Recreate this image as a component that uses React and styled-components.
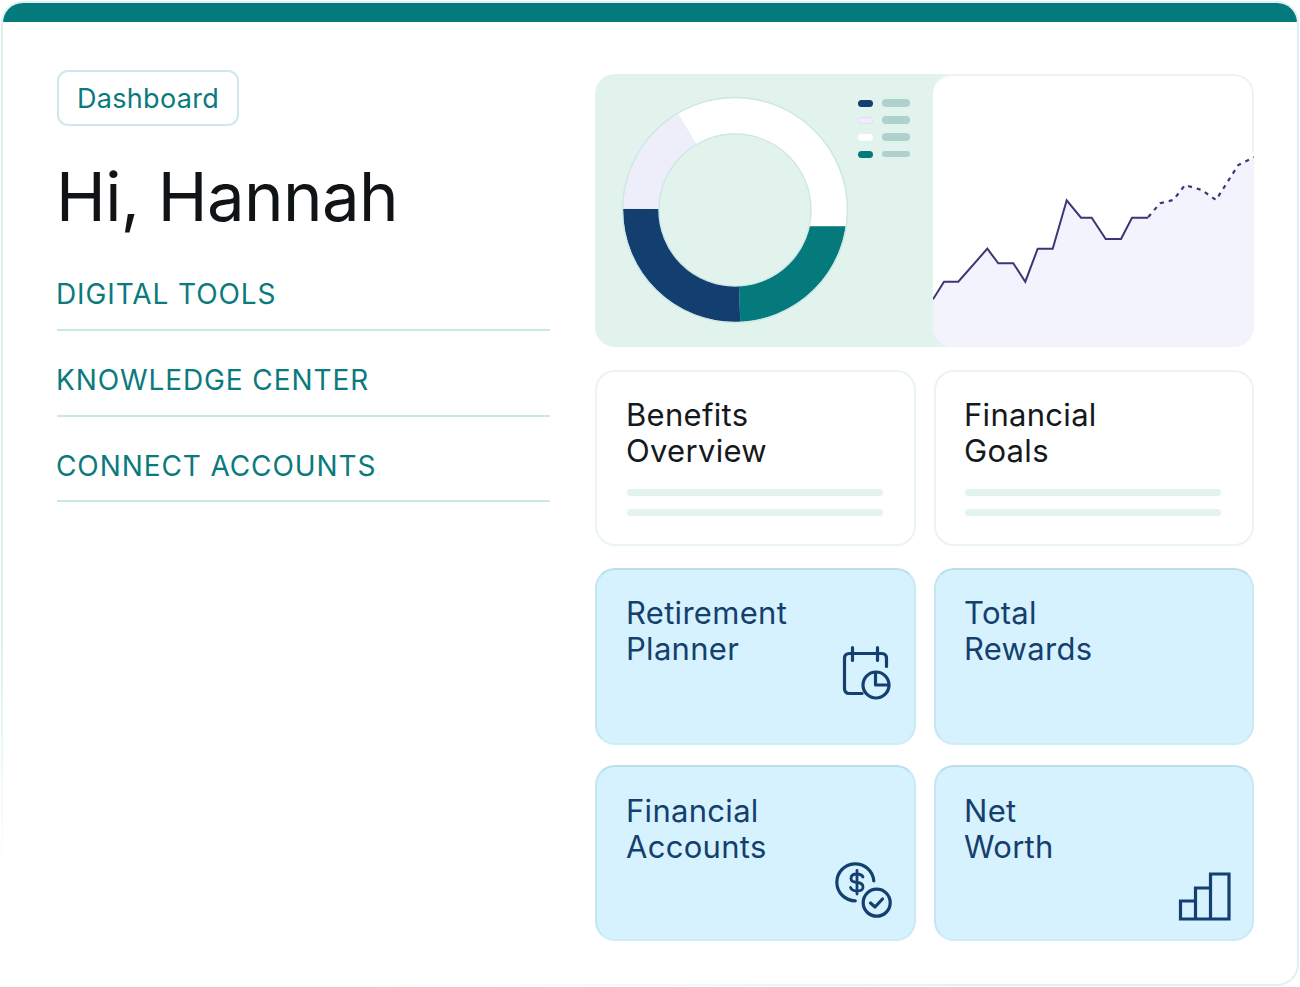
import React from "react";
import styled, { createGlobalStyle } from "styled-components";

const Global = createGlobalStyle`
  html, body { margin: 0; padding: 0; background: #fff; }
  body { font-family: "Inter", "Liberation Sans", sans-serif; }
`;

const Frame = styled.div`
  box-sizing: border-box;
  width: 1298px;
  height: 985px;
  margin: 1px;
  border: 2px solid transparent;
  border-radius: 22px;
  background:
    linear-gradient(#fff, #fff) padding-box,
    linear-gradient(18deg, #fff 8%, #dcf1f2 24%, #dcf1f2 100%) border-box;
  overflow: hidden;
`;
const TopBar = styled.div`
  height: 20px;
  margin-top: -1px;
  background: #047a7c;
`;
const Body = styled.div`
  display: grid;
  grid-template-columns: 538px 659px;
  padding: 48px 0 0 54px;
`;
const LeftCol = styled.div`
  display: flex;
  flex-direction: column;
  align-items: flex-start;
`;
const Badge = styled.div`
  box-sizing: border-box;
  height: 56px;
  width: 182px;
  display: flex;
  align-items: center;
  justify-content: center;
  border: 2px solid #cfe8ec;
  border-radius: 11px;
  font-size: 27px;
  letter-spacing: 0.3px;
  color: #0b7a7d;
`;
const Title = styled.h1`
  margin: 31px 0 0 -1px;
  font-size: 67px;
  line-height: 80px;
  font-weight: 400;
  color: #111417;
  letter-spacing: -0.6px;
`;
const Nav = styled.nav`
  width: 493px;
  margin-top: 40px;
  display: flex;
  flex-direction: column;
`;
const NavItem = styled.a`
  box-sizing: border-box;
  height: 86px;
  padding-top: 32px;
  border-bottom: 2px solid #cbe8e8;
  font-size: 28px;
  line-height: 34px;
  letter-spacing: 0.9px;
  text-indent: -1px;
  color: #0b7a7d;
  &:first-child { padding-top: 0; height: 54px; }
  &:last-child { height: 85px; }
`;
const RightCol = styled.div`
  display: grid;
  grid-template-columns: 321px 320px;
  grid-template-rows: 276px 178px 177px 176px;
  column-gap: 18px;
  row-gap: 20px;
  padding-top: 4px;
`;
const ChartPanel = styled.div`
  grid-column: 1 / span 2;
  height: 273px;
  width: 659px;
  display: flex;
  border-radius: 20px;
  background: linear-gradient(90deg, #e2f3ee 54%, transparent 54%);
`;
const DonutSide = styled.div`
  width: 338px;
  display: flex;
  align-items: flex-start;
  padding: 20px 0 0 24px;
  box-sizing: border-box;
`;
const DonutSvg = styled.svg`
  flex: none;
  width: 232px;
  height: 232px;
`;
const Legend = styled.div`
  margin: 5px 0 0 7px;
  display: flex;
  flex-direction: column;
  gap: 9px;
`;
const LegendRow = styled.div`
  display: flex;
  align-items: center;
  gap: 9px;
  height: 8px;
`;
const Swatch = styled.span`
  width: 15px;
  height: 7px;
  border-radius: 4px;
  background: ${(p) => p.$color};
  box-shadow: ${(p) => (p.$ring ? "inset 0 0 0 1px #dfe0f2" : "none")};
`;
const LegendBar = styled.span`
  width: 28px;
  height: ${(p) => p.$h}px;
  border-radius: 4px;
  background: #b0d0cd;
`;
const LineSide = styled.div`
  flex: 1;
  position: relative;
  background: #fff;
  border-radius: 20px;
  overflow: hidden;
  &::after {
    content: "";
    position: absolute;
    top: 0;
    left: 0;
    right: 0;
    height: 78px;
    box-sizing: border-box;
    border-top: 2px solid #eef1f6;
    border-right: 2px solid #eef1f6;
    border-top-left-radius: 20px;
    border-top-right-radius: 20px;
  }
`;
const LineSvg = styled.svg`
  display: block;
  width: 100%;
  height: 100%;
`;
const Card = styled.div`
  box-sizing: border-box;
  display: flex;
  justify-content: space-between;
  padding: ${(p) => (p.$low ? 26 : 25)}px 0 0 30px;
  border-radius: 20px;
  border: 2px solid ${(p) => (p.$blue ? "#bbdeea" : "#eaf4f4")};
  background: ${(p) => (p.$blue ? "#d5f2fe" : "#fff")};
  ${(p) => (p.$blue ? "border-left-color:#c5e5f0;border-right-color:#cbe9f3;border-bottom-color:#d0edf7;" : "")}
  margin-bottom: ${(p) => p.$mb || 0}px;
  &:nth-child(odd) { padding-left: 29px; }
`;
const CardBody = styled.div`
  flex: 1;
  display: flex;
  flex-direction: column;
`;
const CardTitle = styled.div`
  margin-left: -1px;
  font-size: 31px;
  line-height: 36px;
  font-weight: 400;
  letter-spacing: 0.3px;
  white-space: pre-line;
  color: ${(p) => (p.$blue ? "#153f6e" : "#15191d")};
`;
const Lines = styled.div`
  margin: 20px 31px 0 0;
  display: flex;
  flex-direction: column;
  gap: 13px;
`;
const Line = styled.div`
  height: 7px;
  border-radius: 4px;
  background: #e3f3ee;
`;
const Icon = styled.svg`
  flex: none;
  width: 60px;
  height: 60px;
  margin-top: ${(p) => p.$top}px;
  margin-right: ${(p) => p.$right}px;
  fill: none;
  stroke: #153f6e;
  stroke-width: 3.2;
  stroke-linecap: ${(p) => (p.$square ? "butt" : "round")};
  stroke-linejoin: ${(p) => (p.$square ? "miter" : "round")};
`;

const sector = (a0, a1, b0, b1, R = 112, r = 76, c = 116) => {
  const pt = (rad, a) => {
    const t = (a * Math.PI) / 180;
    return `${(c + rad * Math.sin(t)).toFixed(2)} ${(c - rad * Math.cos(t)).toFixed(2)}`;
  };
  const large = a1 - a0 > 180 ? 1 : 0;
  return `M${pt(R, a0)} A${R} ${R} 0 ${large} 1 ${pt(R, a1)} L${pt(r, b1)} A${r} ${r} 0 ${large} 0 ${pt(r, b0)} Z`;
};

const Donut = () => (
  <DonutSvg viewBox="0 0 232 232">
    <path d={sector(-30.6, 98.4, -30.4, 102.3)} fill="#fff" />
    <path d={sector(98.4, 177.3, 102.3, 177)} fill="#047a7c" />
    <path d={sector(177.3, 270.7, 177, 270.7)} fill="#133f70" />
    <path d={sector(270.7, 329.4, 270.7, 329.6)} fill="#eeeefa" />
    <circle cx="116" cy="116" r="112.5" fill="none" stroke="#cce7e6" strokeWidth="1.5" />
    <circle cx="116" cy="116" r="76" fill="none" stroke="#cce7e6" strokeWidth="1.5" />
  </DonutSvg>
);

const solid = "933,299.3 944,281.7 958.3,281.7 987.3,248.7 998.3,263.3 1013.3,263.3 1025.3,281.7 1037.7,248.7 1052.7,248.7 1066.7,200.3 1081,217.7 1091.7,217.7 1105.7,239 1121,239 1132,217.7 1148.3,217.7";
const dashed = "1148.3,217 1160,203.3 1173.3,200 1185,185 1201.7,190 1216,200 1238.3,165 1254,157.3";

const LineChart = () => (
  <LineSvg viewBox="933 74 321 273" preserveAspectRatio="none">
    <polygon points={`${solid} ${dashed} 1254,347 933,347`} fill="#f2f3fc" />
    <polyline points={solid} fill="none" stroke="#3b3678" strokeWidth="2" />
    <polyline points={dashed} fill="none" stroke="#3b3678" strokeWidth="2.2" strokeDasharray="4 5" />
  </LineSvg>
);

const CalendarIcon = () => (
  <Icon $top={50} $right={14} viewBox="20 15 60 60">
    <path d="M66.5 36.5 V28.5 Q66.5 23.5 61.5 23.5 H29.5 Q24.5 23.5 24.5 28.5 V58.5 Q24.5 63.5 29.5 63.5 H42" />
    <path d="M32.5 17.5 V30.5 M57.5 17.5 V30.5" />
    <circle cx="56" cy="55" r="13" />
    <path d="M55.5 43 V55 H68.5" />
  </Icon>
);
const CoinIcon = () => (
  <Icon $top={69} $right={19} viewBox="15 12 60 60">
    <path d="M53.8 31 A18.5 18.5 0 1 0 35.3 50.8" />
    <path d="M43 27 Q41.5 24 37 24 Q31 24 31 28.5 Q31 32 37 32.5 Q43 33 43 37 Q43 41 37 41 Q32 41 30.5 37.5 M37 20.5 V44" strokeWidth="2.8" />
    <circle cx="56.7" cy="52.7" r="13.5" />
    <path d="M50.5 53 L55 57 L62.5 49" />
  </Icon>
);
const BarsIcon = () => (
  <Icon $square $top={72} $right={17} viewBox="15 5 60 60">
    <path d="M20.5 41 H35.5 V59 H20.5 Z M35.5 28 H50.5 V59 H35.5 Z M50.5 14 H69 V59 H50.5 Z" />
  </Icon>
);

export default function App() {
  return (
    <>
      <Global />
      <Frame>
        <TopBar />
        <Body>
          <LeftCol>
            <Badge>Dashboard</Badge>
            <Title>Hi, Hannah</Title>
            <Nav>
              <NavItem>DIGITAL TOOLS</NavItem>
              <NavItem>KNOWLEDGE CENTER</NavItem>
              <NavItem>CONNECT ACCOUNTS</NavItem>
            </Nav>
          </LeftCol>
          <RightCol>
            <ChartPanel>
              <DonutSide>
                <Donut />
                <Legend>
                  <LegendRow><Swatch $color="#133f70" /><LegendBar $h={8} /></LegendRow>
                  <LegendRow><Swatch $color="#eeeefa" $ring /><LegendBar $h={8} /></LegendRow>
                  <LegendRow><Swatch $color="#fff" /><LegendBar $h={8} /></LegendRow>
                  <LegendRow><Swatch $color="#047a7c" /><LegendBar $h={6} /></LegendRow>
                </Legend>
              </DonutSide>
              <LineSide><LineChart /></LineSide>
            </ChartPanel>
            <Card $mb={2}>
              <CardBody>
                <CardTitle>{"Benefits\nOverview"}</CardTitle>
                <Lines><Line /><Line /></Lines>
              </CardBody>
            </Card>
            <Card $mb={2}>
              <CardBody>
                <CardTitle>{"Financial\nGoals"}</CardTitle>
                <Lines><Line /><Line /></Lines>
              </CardBody>
            </Card>
            <Card $blue>
              <CardTitle $blue>{"Retirement\nPlanner"}</CardTitle>
              <CalendarIcon />
            </Card>
            <Card $blue>
              <CardTitle $blue>{"Total\nRewards"}</CardTitle>
            </Card>
            <Card $blue $low>
              <CardTitle $blue>{"Financial\nAccounts"}</CardTitle>
              <CoinIcon />
            </Card>
            <Card $blue $low>
              <CardTitle $blue>{"Net\nWorth"}</CardTitle>
              <BarsIcon />
            </Card>
          </RightCol>
        </Body>
      </Frame>
    </>
  );
}
